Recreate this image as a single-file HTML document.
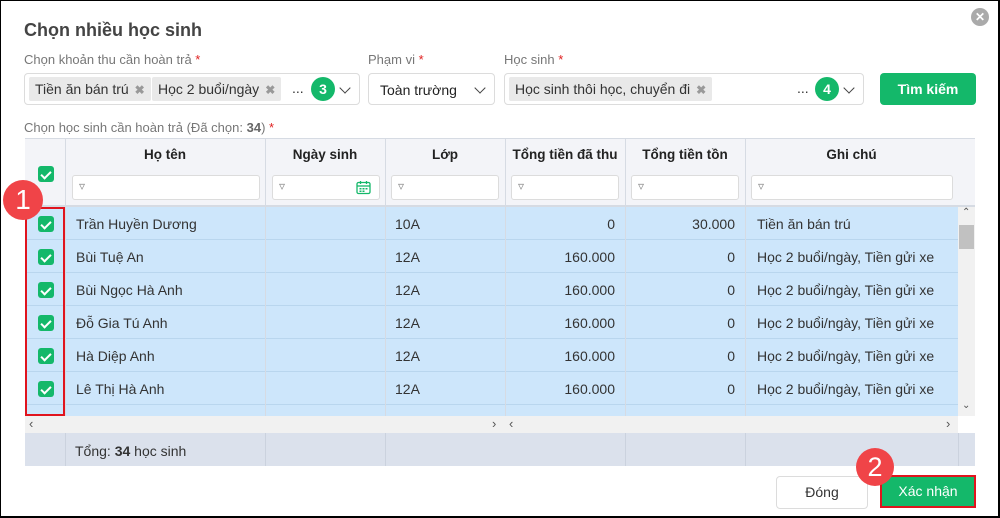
<!DOCTYPE html><html><head><meta charset="utf-8"><style>
*{box-sizing:border-box;margin:0;padding:0}
body{width:1000px;height:518px;overflow:hidden;background:#fff;font-family:"Liberation Sans",Arial,sans-serif;font-size:14px;color:#333;position:relative}
.frame{position:absolute;left:0;top:0;width:1000px;height:518px;border:1px solid #000;border-right:2px solid #000;border-bottom:2px solid #000}
.a{position:absolute}
.lbl{color:#777;font-size:13px}
.req{color:#e02020}
.box{border:1px solid #dcdcdc;border-radius:4px;background:#fff}
.tag{background:#e9e9e9;border-radius:2px;height:24px;line-height:24px;padding:0 6px;font-size:14px;color:#333;display:inline-block}
.tag b{color:#999;font-size:12px;margin-left:6px}
.num{width:24px;height:24px;border-radius:12px;background:#14b86a;color:#fff;font-weight:bold;text-align:center;line-height:24px;font-size:14px}
.chev{width:8px;height:8px;border-right:1.6px solid #444;border-bottom:1.6px solid #444;transform:rotate(45deg)}
.cb{width:16px;height:16px;background:#14b86a;border-radius:3px}
.cb:after{content:"";position:absolute;left:5px;top:2.5px;width:4px;height:8px;border-right:2px solid #fff;border-bottom:2px solid #fff;transform:rotate(45deg)}
.th{font-weight:bold;font-size:13.5px;color:#222;text-align:center}
.flt{height:25px;border:1px solid #dcdcdc;border-radius:3px;background:#fff}
.flt:before{content:"▿";position:absolute;left:6px;top:3px;color:#888;font-size:12px}
.row{position:absolute;left:25px;width:933px;height:33px;background:#cde6fb;border-bottom:1px solid #b9d6ee}
.row div{position:absolute;top:0;line-height:35px;font-size:14px;color:#333}
.vl{position:absolute;width:1px;background:#d6dbe3}
</style></head><body>
<div class="a" style="left:24px;top:20px;font-size:18px;font-weight:bold;color:#444">Chọn nhiều học sinh</div>
<div class="a" style="left:971px;top:8px;width:18px;height:18px;border-radius:9px;background:#aaa;color:#fff;font-size:12px;line-height:18px;text-align:center;font-weight:bold">✕</div>

<div class="a lbl" style="left:24px;top:52px">Chọn khoản thu cần hoàn trả <span class="req">*</span></div>
<div class="a box" style="left:24px;top:73px;width:336px;height:32px"></div>
<div class="a tag" style="left:29px;top:77px">Tiền ăn bán trú<b>✖</b></div>
<div class="a tag" style="left:152px;top:77px">Học 2 buổi/ngày<b>✖</b></div>
<div class="a" style="left:292px;top:80px">...</div>
<div class="a num" style="left:311px;top:77px">3</div>
<div class="a chev" style="left:341px;top:84px"></div>

<div class="a lbl" style="left:368px;top:52px">Phạm vi <span class="req">*</span></div>
<div class="a box" style="left:368px;top:73px;width:127px;height:32px"></div>
<div class="a" style="left:380px;top:82px;color:#222">Toàn trường</div>
<div class="a chev" style="left:476px;top:84px"></div>

<div class="a lbl" style="left:504px;top:52px">Học sinh <span class="req">*</span></div>
<div class="a box" style="left:504px;top:73px;width:360px;height:32px"></div>
<div class="a tag" style="left:509px;top:77px">Học sinh thôi học, chuyển đi<b>✖</b></div>
<div class="a" style="left:797px;top:80px">...</div>
<div class="a num" style="left:815px;top:77px">4</div>
<div class="a chev" style="left:845px;top:84px"></div>
<div class="a" style="left:880px;top:73px;width:96px;height:32px;background:#14b86a;border-radius:4px;color:#fff;font-weight:bold;text-align:center;line-height:32px">Tìm kiếm</div>

<div class="a lbl" style="left:24px;top:120px">Chọn học sinh cần hoàn trả (Đã chọn: <b style="color:#666">34</b>) <span class="req">*</span></div>

<div class="a" style="left:25px;top:138px;width:950px;height:69px;background:#f3f4f8;border-top:1px solid #d6dbe3;border-bottom:2px solid #d6dbe3"></div>
<div class="a cb" style="left:38px;top:166px"></div>
<div class="a th" style="left:65px;top:147px;width:200px">Họ tên</div>
<div class="a th" style="left:265px;top:147px;width:120px">Ngày sinh</div>
<div class="a th" style="left:385px;top:147px;width:120px">Lớp</div>
<div class="a th" style="left:505px;top:147px;width:120px">Tổng tiền đã thu</div>
<div class="a th" style="left:625px;top:147px;width:120px">Tổng tiền tồn</div>
<div class="a th" style="left:745px;top:147px;width:213px">Ghi chú</div>
<div class="a flt" style="left:72px;top:175px;width:188px"></div>
<div class="a flt" style="left:272px;top:175px;width:108px"><svg style="position:absolute;right:8px;top:4px" width="15" height="15" viewBox="0 0 15 15"><rect x="1" y="2.5" width="13" height="11" rx="1.5" fill="none" stroke="#14b86a" stroke-width="1.3"/><line x1="1" y1="6" x2="14" y2="6" stroke="#14b86a" stroke-width="1.3"/><line x1="4.5" y1="1" x2="4.5" y2="4" stroke="#14b86a" stroke-width="1.3"/><line x1="10.5" y1="1" x2="10.5" y2="4" stroke="#14b86a" stroke-width="1.3"/><rect x="3.5" y="8" width="2" height="1.5" fill="#14b86a"/><rect x="6.5" y="8" width="2" height="1.5" fill="#14b86a"/><rect x="9.5" y="8" width="2" height="1.5" fill="#14b86a"/><rect x="3.5" y="10.5" width="2" height="1.5" fill="#14b86a"/><rect x="6.5" y="10.5" width="2" height="1.5" fill="#14b86a"/></svg></div>
<div class="a flt" style="left:391px;top:175px;width:108px"></div>
<div class="a flt" style="left:511px;top:175px;width:108px"></div>
<div class="a flt" style="left:631px;top:175px;width:108px"></div>
<div class="a flt" style="left:751px;top:175px;width:202px"></div>

<div class="row" style="top:207px"><div style="left:51px">Trần Huyền Dương</div><div style="left:370px">10A</div><div style="left:480px;width:110px;text-align:right">0</div><div style="left:600px;width:110px;text-align:right">30.000</div><div style="left:732px">Tiền ăn bán trú</div></div>
<div class="row" style="top:240px"><div style="left:51px">Bùi Tuệ An</div><div style="left:370px">12A</div><div style="left:480px;width:110px;text-align:right">160.000</div><div style="left:600px;width:110px;text-align:right">0</div><div style="left:732px">Học 2 buổi/ngày, Tiền gửi xe</div></div>
<div class="row" style="top:273px"><div style="left:51px">Bùi Ngọc Hà Anh</div><div style="left:370px">12A</div><div style="left:480px;width:110px;text-align:right">160.000</div><div style="left:600px;width:110px;text-align:right">0</div><div style="left:732px">Học 2 buổi/ngày, Tiền gửi xe</div></div>
<div class="row" style="top:306px"><div style="left:51px">Đỗ Gia Tú Anh</div><div style="left:370px">12A</div><div style="left:480px;width:110px;text-align:right">160.000</div><div style="left:600px;width:110px;text-align:right">0</div><div style="left:732px">Học 2 buổi/ngày, Tiền gửi xe</div></div>
<div class="row" style="top:339px"><div style="left:51px">Hà Diệp Anh</div><div style="left:370px">12A</div><div style="left:480px;width:110px;text-align:right">160.000</div><div style="left:600px;width:110px;text-align:right">0</div><div style="left:732px">Học 2 buổi/ngày, Tiền gửi xe</div></div>
<div class="row" style="top:372px"><div style="left:51px">Lê Thị Hà Anh</div><div style="left:370px">12A</div><div style="left:480px;width:110px;text-align:right">160.000</div><div style="left:600px;width:110px;text-align:right">0</div><div style="left:732px">Học 2 buổi/ngày, Tiền gửi xe</div></div>
<div class="row" style="top:405px;height:11px;border:none"></div>
<div class="a cb" style="left:38px;top:216px"></div>
<div class="a cb" style="left:38px;top:249px"></div>
<div class="a cb" style="left:38px;top:282px"></div>
<div class="a cb" style="left:38px;top:315px"></div>
<div class="a cb" style="left:38px;top:348px"></div>
<div class="a cb" style="left:38px;top:381px"></div>
<div class="vl" style="left:65px;top:138px;height:278px"></div>
<div class="vl" style="left:265px;top:138px;height:278px"></div>
<div class="vl" style="left:385px;top:138px;height:278px"></div>
<div class="vl" style="left:505px;top:138px;height:328px"></div>
<div class="vl" style="left:625px;top:138px;height:278px"></div>
<div class="vl" style="left:745px;top:138px;height:278px"></div>
<div class="a" style="left:958px;top:207px;width:17px;height:209px;background:#f1f1f1"></div>
<div class="a" style="left:959px;top:225px;width:15px;height:24px;background:#c1c1c1"></div>
<div class="a" style="left:962px;top:207px;font-size:10px;color:#555">⌃</div>
<div class="a" style="left:962px;top:400px;font-size:10px;color:#555">⌄</div>
<div class="a" style="left:25px;top:416px;width:933px;height:17px;background:#f1f1f1"></div>
<div class="a" style="left:29px;top:416px;font-size:13px;color:#555">‹</div>
<div class="a" style="left:492px;top:416px;font-size:13px;color:#555">›</div>
<div class="a" style="left:509px;top:416px;font-size:13px;color:#555">‹</div>
<div class="a" style="left:946px;top:416px;font-size:13px;color:#555">›</div>
<div class="a" style="left:25px;top:433px;width:950px;height:33px;background:#dbe1ec"></div>
<div class="vl" style="left:65px;top:433px;height:33px;background:#cbd2de"></div>
<div class="vl" style="left:265px;top:433px;height:33px;background:#cbd2de"></div>
<div class="vl" style="left:385px;top:433px;height:33px;background:#cbd2de"></div>
<div class="vl" style="left:625px;top:433px;height:33px;background:#cbd2de"></div>
<div class="vl" style="left:745px;top:433px;height:33px;background:#cbd2de"></div>
<div class="vl" style="left:958px;top:433px;height:33px;background:#cbd2de"></div>
<div class="a" style="left:75px;top:443px;font-size:14px;color:#333">Tổng: <b>34</b> học sinh</div>

<div class="a" style="left:25px;top:207px;width:40px;height:209px;border:2px solid #e0141e"></div>
<div class="a" style="left:3px;top:180px;width:40px;height:40px;border-radius:20px;background:#f04448;color:#fff;font-size:28px;text-align:center;line-height:40px">1</div>

<div class="a" style="left:776px;top:476px;width:92px;height:33px;border:1px solid #dcdcdc;border-radius:4px;text-align:center;line-height:31px;color:#333">Đóng</div>
<div class="a" style="left:880px;top:475px;width:96px;height:33px;border:2px solid #e0141e;background:#14b86a;color:#fff;text-align:center;line-height:29px">Xác nhận</div>
<div class="a" style="left:856px;top:448px;width:38px;height:38px;border-radius:19px;background:#f04448;color:#fff;font-size:27px;text-align:center;line-height:38px">2</div>
<div class="frame"></div>
</body></html>
